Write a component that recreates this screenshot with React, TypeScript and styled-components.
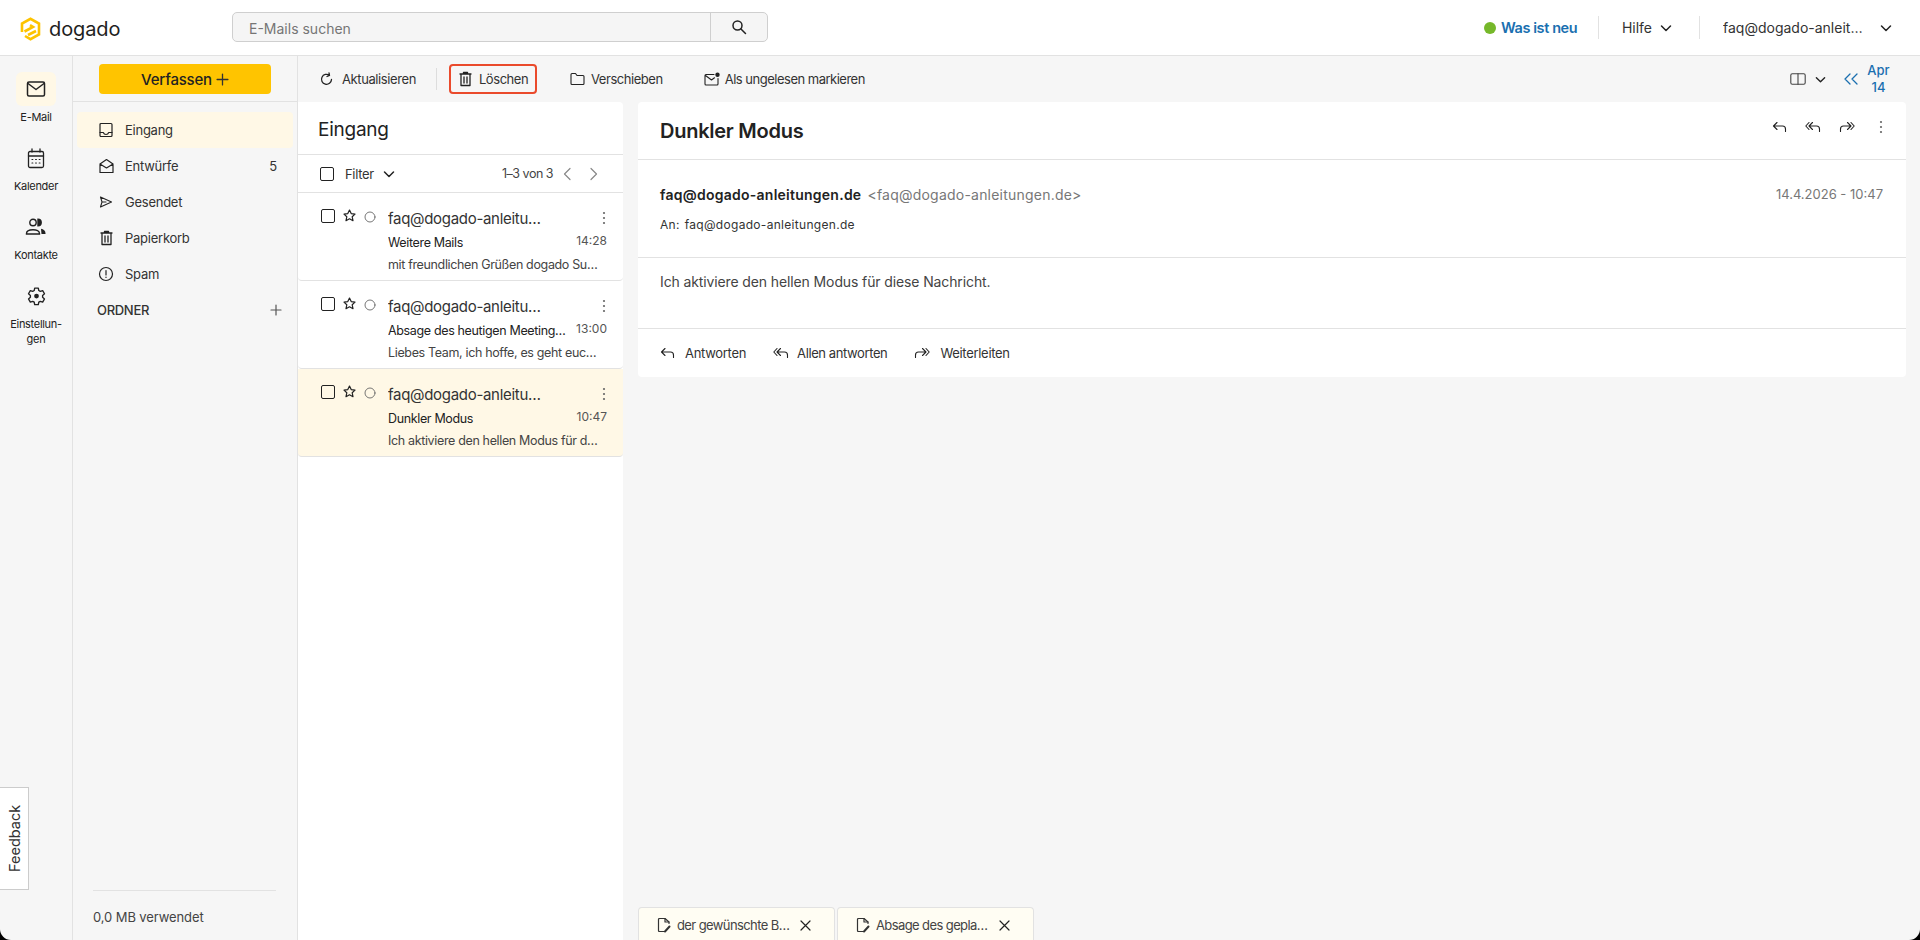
import React from "react";
import styled, { createGlobalStyle } from "styled-components";

const Global = createGlobalStyle`
  html, body { margin: 0; padding: 0; background: #000; height: 100%; overflow: hidden; }
  #root { height: 100%; }
  * { box-sizing: border-box; }
  body { font-family: Inter, "Noto Sans", sans-serif; color: #222; }
`;

const Page = styled.div`
  position: relative;
  width: 1920px;
  height: 940px;
  background: #f6f6f6;
  border-radius: 0 0 11px 11px;
  overflow: hidden;
  display: flex;
  flex-direction: column;
`;

const Header = styled.header`
  height: 56px;
  flex: none;
  background: #fff;
  border-bottom: 1px solid #e2e2e2;
  display: flex;
  align-items: center;
  padding: 0 28px 1px 20px;
`;
const LogoWrap = styled.div`
  width: 212px;
  margin-top: 4px;
  display: flex;
  align-items: center;
  gap: 8px;
  font-size: 20px;
  letter-spacing: -0.1px;
  color: #1f1f1f;
`;
const Search = styled.div`
  width: 536px;
  height: 30px;
  display: flex;
  background: #f5f5f5;
  border: 1px solid #cfcfcf;
  border-radius: 5px;
`;
const SearchText = styled.div`
  flex: 1;
  padding-left: 16px;
  line-height: 31px;
  font-size: 14px;
  color: #757575;
`;
const SearchBtn = styled.div`
  width: 57px;
  border-left: 1px solid #cfcfcf;
  display: flex;
  align-items: center;
  justify-content: center;
`;
const HeaderRight = styled.div`
  margin-left: auto;
  margin-top: 1px;
  display: flex;
  align-items: center;
`;
const Dot = styled.span`
  width: 12px;
  height: 12px;
  border-radius: 50%;
  background: #76b82a;
  margin-right: 5px;
`;
const WhatsNew = styled.span`
  width: 75px;
  white-space: nowrap;
  font-size: 14.5px;
  font-weight: 600;
  color: #1a6fb0;
  letter-spacing: -0.4px;
  margin-right: 22px;
`;
const HeadDivider = styled.span<{ $ml?: number }>`
  width: 1px;
  height: 23px;
  background: #e2e2e2;
  margin-left: ${(p) => p.$ml ?? 0}px;
`;
const HeadLink = styled.span<{ $l: number; $r: number; $w?: number }>`
  font-size: 14px;
  color: #333;
  white-space: nowrap;
  margin-left: ${(p) => p.$l}px;
  margin-right: ${(p) => p.$r}px;
  ${(p) => (p.$w ? `width: ${p.$w}px; overflow: hidden; text-overflow: ellipsis;` : "")}
`;

const Body = styled.div`
  flex: 1;
  min-height: 0;
  display: flex;
`;
const Rail = styled.nav`
  width: 73px;
  flex: none;
  padding-top: 16px;
  border-right: 1px solid #e2e2e2;
  display: flex;
  flex-direction: column;
`;
const RailItem = styled.div`
  height: 69px;
  display: flex;
  flex-direction: column;
  align-items: center;
`;
const RailIcon = styled.div<{ $active?: boolean }>`
  width: 40px;
  height: 34px;
  flex: none;
  border-radius: 6px;
  display: flex;
  align-items: center;
  justify-content: center;
  background: ${(p) => (p.$active ? "#fff8e6" : "transparent")};
`;
const RailLabel = styled.div`
  margin-top: 4px;
  font-size: 11px;
  line-height: 15px;
  letter-spacing: -0.3px;
  text-align: center;
  color: #222;
`;

const Folders = styled.aside`
  width: 225px;
  flex: none;
  border-right: 1px solid #e2e2e2;
  display: flex;
  flex-direction: column;
`;
const ComposeBar = styled.div`
  height: 46px;
  flex: none;
  padding-top: 8px;
  display: flex;
  justify-content: center;
  border-bottom: 1px solid #e2e2e2;
`;
const Compose = styled.div`
  width: 172px;
  height: 30px;
  background: #ffc400;
  border-radius: 4px;
  display: flex;
  align-items: center;
  justify-content: center;
  gap: 4px;
  font-size: 15px;
  font-weight: 500;
  letter-spacing: -0.2px;
  color: #222;
`;
const FolderList = styled.div`
  padding: 10px 4px 0;
`;
const FolderRow = styled.div<{ $active?: boolean }>`
  height: 36px;
  padding: 0 16px 0 21px;
  display: flex;
  align-items: center;
  gap: 11px;
  border-radius: 4px;
  font-size: 13px;
  letter-spacing: -0.25px;
  color: #333;
  background: ${(p) => (p.$active ? "#fff8e6" : "transparent")};
`;
const SectionRow = styled(FolderRow)`
  padding: 0 11px 0 20px;
`;
const FolderIcon = styled.span`
  width: 16px;
  display: flex;
  justify-content: center;
`;
const FolderName = styled.span`
  flex: 1;
`;
const SectionName = styled.span`
  flex: 1;
  font-size: 13px;
  font-weight: 500;
  letter-spacing: -0.3px;
`;
const FolderFooter = styled.div`
  margin: auto 21px 0 20px;
  height: 50px;
  border-top: 1px solid #e2e2e2;
  padding-top: 18px;
  font-size: 13px;
  line-height: 16px;
  letter-spacing: -0.1px;
  color: #444;
`;
const Feedback = styled.div`
  position: absolute;
  left: 0;
  top: 787px;
  width: 29px;
  height: 103px;
  background: #fff;
  border: 1px solid #ccc;
  border-right: 0;
  writing-mode: vertical-rl;
  transform: rotate(180deg);
  display: flex;
  align-items: center;
  justify-content: center;
  font-size: 14.5px;
  color: #333;
`;

const Main = styled.main`
  flex: 1;
  min-width: 0;
  display: flex;
  flex-direction: column;
`;
const Toolbar = styled.div`
  height: 46px;
  flex: none;
  display: flex;
  align-items: center;
  padding: 0 26px 0 22px;
  font-size: 13px;
  letter-spacing: -0.45px;
  color: #333;
`;
const ToolBtn = styled.div<{ $gap: number; $mr: number; $ls?: number }>`
  display: flex;
  align-items: center;
  gap: ${(p) => p.$gap}px;
  margin-right: ${(p) => p.$mr}px;
  ${(p) => (p.$ls !== undefined ? `letter-spacing: ${p.$ls}px;` : "")}
`;
const ToolDivider = styled.span`
  width: 1px;
  height: 22px;
  background: #ddd;
  margin-right: 12px;
`;
const DeleteBtn = styled.div`
  width: 88px;
  height: 30px;
  margin-right: 33px;
  padding-left: 7px;
  border: 2px solid #ea4a2c;
  border-radius: 4px;
  display: flex;
  align-items: center;
  gap: 6px;
`;
const ToolRight = styled.div`
  margin-left: auto;
  display: flex;
  align-items: center;
`;
const ToolSpacer = styled.span<{ $w: number }>`
  width: ${(p) => p.$w}px;
`;
const DateNav = styled.div`
  width: 31px;
  margin-left: 5px;
  font-size: 13px;
  line-height: 17px;
  font-weight: 500;
  letter-spacing: 0;
  color: #1a6fb0;
  text-align: center;
`;

const Content = styled.div`
  flex: 1;
  min-height: 0;
  display: flex;
  gap: 15px;
  padding-right: 14px;
`;
const ListCard = styled.section`
  width: 325px;
  flex: none;
  background: #fff;
  border-radius: 0 4px 0 0;
`;
const ListTitle = styled.div`
  height: 53px;
  padding: 3px 20px 0;
  display: flex;
  align-items: center;
  font-size: 19px;
  letter-spacing: -0.25px;
  color: #222;
  border-bottom: 1px solid #e2e2e2;
`;
const FilterBar = styled.div`
  height: 38px;
  padding: 0 24px 0 22px;
  display: flex;
  align-items: center;
  border-bottom: 1px solid #e2e2e2;
  font-size: 13px;
  color: #333;
`;
const Check = styled.span`
  width: 14px;
  height: 14px;
  flex: none;
  border: 1.5px solid #222;
  border-radius: 2px;
`;
const FilterText = styled.span`
  margin: 0 9px 0 11px;
  letter-spacing: -0.3px;
`;
const Pager = styled.div`
  margin-left: auto;
  display: flex;
  align-items: center;
  gap: 9px;
  font-size: 12.5px;
  letter-spacing: -0.5px;
  color: #444;
`;
const PagerNext = styled.span`
  margin-left: 8px;
  display: flex;
`;
const MailRow = styled.div<{ $selected?: boolean }>`
  height: 88px;
  padding: 15px 17px 0 23px;
  display: flex;
  background: ${(p) => (p.$selected ? "#fff8e6" : "#fff")};
  border-bottom: 1px solid #e2e2e2;
  border-radius: 0 0 4px 4px;
`;
const RowMarks = styled.div`
  width: 67px;
  flex: none;
  padding-top: 1px;
  display: flex;
  align-items: flex-start;
  gap: 8px;
`;
const RingWrap = styled.span`
  margin-top: 2px;
  display: flex;
`;
const RowBody = styled.div`
  flex: 1;
  min-width: 0;
`;
const RowLine = styled.div<{ $h: number }>`
  height: ${(p) => p.$h}px;
  display: flex;
  align-items: center;
  justify-content: space-between;
`;
const Sender = styled.span`
  width: 161px;
  font-size: 15px;
  letter-spacing: -0.3px;
  color: #333;
  white-space: nowrap;
  overflow: hidden;
  text-overflow: ellipsis;
`;
const Subject = styled.span`
  width: 180px;
  font-size: 12.5px;
  letter-spacing: -0.35px;
  color: #222;
  white-space: nowrap;
  overflow: hidden;
  text-overflow: ellipsis;
`;
const Time = styled.span`
  font-size: 12px;
  color: #555;
  margin: -4px -1px 0 0;
`;
const Preview = styled.div`
  width: 212px;
  font-size: 12.5px;
  line-height: 17px;
  letter-spacing: -0.35px;
  color: #444;
  white-space: nowrap;
  overflow: hidden;
  text-overflow: ellipsis;
`;

const Reader = styled.div`
  flex: 1;
  min-width: 0;
  display: flex;
  flex-direction: column;
`;
const MailCard = styled.article`
  height: 275px;
  flex: none;
  background: #fff;
  border-radius: 4px;
`;
const MailHead = styled.div`
  height: 58px;
  padding: 0 23px 0 22px;
  display: flex;
  align-items: center;
  justify-content: space-between;
  border-bottom: 1px solid #e2e2e2;
`;
const MailTitle = styled.h1`
  margin: 0;
  font-size: 20px;
  font-weight: 600;
  letter-spacing: -0.25px;
  color: #222;
`;
const MailIcons = styled.div`
  display: flex;
  gap: 18px;
  margin-top: -7px;
`;
const MailDotsWrap = styled.span`
  margin-left: 6px;
  display: flex;
`;
const MailMeta = styled.div`
  height: 98px;
  padding: 23px 23px 0 22px;
  border-bottom: 1px solid #e2e2e2;
`;
const MetaTop = styled.div`
  display: flex;
  align-items: center;
  height: 22px;
`;
const From = styled.span`
  font-size: 14px;
  font-weight: 600;
  letter-spacing: 0.25px;
  color: #222;
`;
const Addr = styled.span`
  margin-left: 6px;
  font-size: 14px;
  color: #777;
  letter-spacing: 0.22px;
`;
const MailDate = styled.span`
  margin-left: auto;
  font-size: 13px;
  color: #777;
`;
const To = styled.div`
  margin-top: 12px;
  font-size: 12px;
  line-height: 16px;
  color: #333;
  letter-spacing: 0.3px;
`;
const ToAddr = styled.span`
  margin-left: 5px;
`;
const MailBody = styled.div`
  height: 71px;
  padding: 14px 22px 0;
  font-size: 14px;
  line-height: 20px;
  letter-spacing: -0.12px;
  color: #444;
  border-bottom: 1px solid #e2e2e2;
`;
const Actions = styled.div`
  height: 47px;
  padding: 0 22px;
  display: flex;
  align-items: center;
  font-size: 13px;
  letter-spacing: -0.3px;
  color: #333;
`;
const ActionBtn = styled.div<{ $gap?: number; $ls?: number }>`
  display: flex;
  align-items: center;
  gap: ${(p) => p.$gap ?? 10}px;
  margin-right: 27px;
  ${(p) => (p.$ls !== undefined ? `letter-spacing: ${p.$ls}px;` : "")}
`;
const Tabs = styled.div`
  margin-top: auto;
  display: flex;
  gap: 2px;
`;
const Tab = styled.div`
  width: 197px;
  height: 33px;
  padding: 2px 22px 0 18px;
  display: flex;
  align-items: center;
  background: #fffdf3;
  border: 1px solid #e2e2e2;
  border-bottom: 0;
  border-radius: 4px 4px 0 0;
  font-size: 13px;
  color: #444;
`;
const TabText = styled.span`
  width: 119px;
  margin: 0 4px 0 6px;
  white-space: nowrap;
  overflow: hidden;
  text-overflow: ellipsis;
  letter-spacing: -0.6px;
`;

type IconProps = { w?: number; h?: number; c?: string; sw?: number; children: React.ReactNode; vb?: string };
const Ico = ({ w = 16, h = 16, c = "#222", sw = 1.4, vb = "0 0 16 16", children }: IconProps) => (
  <svg width={w} height={h} viewBox={vb} fill="none" stroke={c} strokeWidth={sw} strokeLinecap="round" strokeLinejoin="round" style={{ flex: "none" }}>
    {children}
  </svg>
);

const Logo = () => (
  <svg width="21" height="24" viewBox="0 0 21 24" fill="none" stroke="#fdc300" strokeWidth="2.6" strokeLinejoin="miter" style={{ flex: "none" }}>
    <path d="M2 15V6.500L10.500 1.800 19 6.500V17.500L10.500 22.200 5 19" />
    <path d="M4.500 14.500 13 10 10 8.200M8 18 16 14" />
  </svg>
);
const Chevron = ({ w = 12, c = "#222" }: { w?: number; c?: string }) => (
  <Ico w={w} h={w} c={c} sw={1.5} vb="0 0 12 12"><path d="M1.5 4 6 8.5 10.5 4" /></Ico>
);
const ChevL = () => <Ico w={10} h={14} c="#888" sw={1.2} vb="0 0 10 14"><path d="M8 1.5 2.5 7 8 12.5" /></Ico>;
const ChevR = () => <Ico w={10} h={14} c="#888" sw={1.2} vb="0 0 10 14"><path d="M2 1.5 7.500 7 2 12.5" /></Ico>;

const ReplyI = () => <Ico w={15} h={14} sw={1.1} vb="0 0 15 14"><path d="M5 2.500 1.500 6 5 9.500M1.500 6H10.500Q13.500 6 13.500 9V11.500" /></Ico>;
const ReplyAllI = () => <Ico w={16} h={14} sw={1.1} vb="0 0 16 14"><path d="M4 2.500.8 6 4 9.500M7.500 2.500 4 6 7.500 9.500M4 6H11.500Q14.500 6 14.500 9V11.500" /></Ico>;
const ForwardI = () => <Ico w={16} h={14} sw={1.1} vb="0 0 16 14"><path d="M12 2.500 15.200 6 12 9.500M8.500 2.500 12 6 8.500 9.500M12 6H4.500Q1.500 6 1.500 9V11.500" /></Ico>;
const DotsI = ({ c = "#666" }: { c?: string }) => (
  <svg width="4" height="14" viewBox="0 0 4 14" fill={c} style={{ flex: "none" }}><circle cx="2" cy="2" r="1.1" /><circle cx="2" cy="7" r="1.1" /><circle cx="2" cy="12" r="1.1" /></svg>
);
const TrashI = () => <Ico w={15} h={16} sw={1.3} vb="0 0 15 16"><path d="M2 3H13M5.500 3V1.500H9.500V3M3 3V14.500H12V3M6 6V12M9 6V12" /></Ico>;
const MailI = () => <Ico w={20} h={18} sw={1.5} vb="0 0 20 18"><rect x="1.500" y="2" width="17" height="14" rx="1.500" /><path d="M2 3.500 10 9.500 18 3.500" /></Ico>;
const CalendarI = () => (
  <Ico w={18} h={21} sw={1.3} vb="0 0 18 21">
    <rect x="1.500" y="3.500" width="15" height="16" rx="1.500" />
    <path d="M1.500 8H16.500M5 1V4M13 1V4" />
    <path strokeWidth="1.200" d="M5 11.500h.8M8.600 11.500h.8M12.200 11.500h.8M5 15h.8M8.600 15h.8M12.200 15h.8" />
  </Ico>
);
const ContactsI = () => (
  <svg width="22" height="18" viewBox="0 0 22 18" fill="none" stroke="#222" strokeWidth="1.400" style={{ flex: "none" }}>
    <circle cx="8" cy="4.500" r="3.200" />
    <path d="M13 1.300a3.200 3.200 0 0 1 0 6.400z" fill="#222" />
    <path d="M1.500 15.500c0-2.500 3-3.800 6.500-3.800s6.500 1.300 6.500 3.800v.5h-13z" />
    <path d="M16 10.800c2.500.3 4.500 1.800 4.500 4.700V16H16.500z" fill="#222" stroke="none" />
  </svg>
);
const GearI = () => (
  <svg width="19" height="20" viewBox="0 0 24 24" fill="none" stroke="#222" strokeWidth="1.700" strokeLinejoin="round" style={{ flex: "none" }}>
    <path d="M9.700 2h4.600l.6 3.100 1.900 1.100 3-1 2.300 4-2.400 2.100v2.300l2.400 2.100-2.300 4-3-1-1.900 1.100-.6 3.100H9.700l-.6-3.100-1.900-1.100-3 1-2.300-4 2.400-2.100v-2.300L1.900 9.200l2.300-4 3 1 1.900-1.100z" />
    <circle cx="12" cy="12" r="3" fill="#222" stroke="none" />
  </svg>
);
const InboxI = () => <Ico w={14} h={16} sw={1.2} vb="0 0 14 16"><rect x="1" y="1.500" width="12" height="13" rx="1" /><path d="M1 10.500H4.300Q5 12.500 7 12.500T9.700 10.500H13" /></Ico>;
const DraftI = () => <Ico w={15} h={16} sw={1.200} vb="0 0 15 16"><path d="M1 6 7.500 1.500 14 6V14.500H1zM1 6 7.500 10 14 6" /></Ico>;
const SentI = () => <Ico w={14} h={14} sw={1.100} vb="0 0 14 14"><path d="M1.500 2 12.500 7 1.500 12 3 7zM3 7H7" /></Ico>;
const SpamI = () => (
  <Ico w={16} h={16} sw={1.200} vb="0 0 16 16"><circle cx="8" cy="8" r="6.500" /><path d="M8 4.500V9M8 11.200v.3" /></Ico>
);
const Plus = ({ s = 12, c = "#555" }: { s?: number; c?: string }) => (
  <Ico w={s} h={s} c={c} sw={1.200} vb="0 0 12 12"><path d="M6 1V11M1 6H11" /></Ico>
);
const StarI = () => (
  <Ico w={13} h={13} sw={1.200} vb="0 0 13 13"><path d="M6.500 1 8.200 4.600 12 5.100 9.200 7.800 10 11.700 6.500 9.800 3 11.700 3.800 7.800 1 5.100 4.800 4.600z" /></Ico>
);
const RingI = () => <Ico w={12} h={12} c="#666" sw={0.900} vb="0 0 12 12"><circle cx="6" cy="6" r="5" /></Ico>;
const DraftFileI = () => (
  <Ico w={14} h={16} c="#333" sw={1.200} vb="0 0 14 16">
    <path d="M7.500 14.500H2.500Q1.500 14.500 1.500 13.500V2.500Q1.500 1.500 2.500 1.500H8L12 5V6.500" />
    <path d="M8 1.500V5H12" />
    <path d="M8 14.500 12.500 9.500" strokeWidth="2" />
  </Ico>
);
const CloseI = () => <Ico w={11} h={11} sw={1.200} vb="0 0 11 11"><path d="M1 1 10 10M10 1 1 10" /></Ico>;

const mails = [
  { subject: "Weitere Mails", time: "14:28", preview: "mit freundlichen Grüßen dogado Support Team" },
  { subject: "Absage des heutigen Meetings wegen", time: "13:00", preview: "Liebes Team, ich hoffe, es geht euch allen gut" },
  { subject: "Dunkler Modus", time: "10:47", preview: "Ich aktiviere den hellen Modus für diese Nachricht.", selected: true },
];
const folders = [
  { name: "Eingang", icon: <InboxI />, active: true },
  { name: "Entwürfe", icon: <DraftI />, count: "5" },
  { name: "Gesendet", icon: <SentI /> },
  { name: "Papierkorb", icon: <TrashI /> },
  { name: "Spam", icon: <SpamI /> },
];

export default function App() {
  return (
    <Page>
      <Global />
      <Header>
        <LogoWrap><Logo />dogado</LogoWrap>
        <Search>
          <SearchText>E-Mails suchen</SearchText>
          <SearchBtn>
            <Ico w={16} h={16} sw={1.500}><circle cx="6.500" cy="6.500" r="4.500" /><path d="M10 10 14.500 14.500" /></Ico>
          </SearchBtn>
        </Search>
        <HeaderRight>
          <Dot />
          <WhatsNew>Was ist neu</WhatsNew>
          <HeadDivider />
          <HeadLink $l={23} $r={8}>Hilfe</HeadLink>
          <Chevron />
          <HeadDivider $ml={27} />
          <HeadLink $l={23} $r={13} $w={144}>faq@dogado-anleitungen.de</HeadLink>
          <Chevron />
        </HeaderRight>
      </Header>
      <Body>
        <Rail>
          <RailItem><RailIcon $active><MailI /></RailIcon><RailLabel>E-Mail</RailLabel></RailItem>
          <RailItem><RailIcon><CalendarI /></RailIcon><RailLabel>Kalender</RailLabel></RailItem>
          <RailItem><RailIcon><ContactsI /></RailIcon><RailLabel>Kontakte</RailLabel></RailItem>
          <RailItem><RailIcon><GearI /></RailIcon><RailLabel>Einstellun-<br />gen</RailLabel></RailItem>
        </Rail>
        <Folders>
          <ComposeBar><Compose>Verfassen <Plus s={13} c="#333" /></Compose></ComposeBar>
          <FolderList>
            {folders.map((f) => (
              <FolderRow key={f.name} $active={f.active}>
                <FolderIcon>{f.icon}</FolderIcon>
                <FolderName>{f.name}</FolderName>
                {f.count}
              </FolderRow>
            ))}
            <SectionRow>
              <SectionName>ORDNER</SectionName>
              <Plus />
            </SectionRow>
          </FolderList>
          <FolderFooter>0,0 MB verwendet</FolderFooter>
        </Folders>
        <Main>
          <Toolbar>
            <ToolBtn $gap={9} $mr={20} $ls={-0.4}>
              <Ico w={13} h={14} sw={1.300} vb="0 0 13 14"><path d="M11.500 7.500A5 5 0 1 1 9.500 3.300M9 .8 9.500 3.300 7 4.500" /></Ico>
              Aktualisieren
            </ToolBtn>
            <ToolDivider />
            <DeleteBtn><TrashI />Löschen</DeleteBtn>
            <ToolBtn $gap={6} $mr={41}>
              <Ico w={15} h={14} sw={1.100} vb="0 0 15 14"><path d="M1 2.500Q1 1.500 2 1.500H5.500L7 3.500H13Q14 3.500 14 4.500V11.500Q14 12.500 13 12.500H2Q1 12.500 1 11.500z" /></Ico>
              Verschieben
            </ToolBtn>
            <ToolBtn $gap={5} $mr={0} $ls={-0.5}>
              <Ico w={16} h={14} sw={1.100} vb="0 0 16 14"><path d="M10 2.500H2Q1 2.500 1 3.500V12Q1 13 2 13H13Q14 13 14 12V6.500M1.500 3.500 7.500 8 10.500 5.800" /><circle cx="13.500" cy="2.800" r="2.200" fill="#222" stroke="none" /></Ico>
              Als ungelesen markieren
            </ToolBtn>
            <ToolRight>
              <Ico w={16} h={12} c="#444" sw={1.100} vb="0 0 16 12"><rect x=".8" y=".8" width="14.400" height="10.400" rx="1.500" /><path d="M8 .8V11.200" /></Ico>
              <ToolSpacer $w={9} />
              <Chevron w={11} />
              <ToolSpacer $w={18} />
              <Ico w={14} h={12} c="#1a6fb0" sw={1.300} vb="0 0 14 12"><path d="M6 1 1 6 6 11M13 1 8 6 13 11" /></Ico>
              <DateNav>Apr<br />14</DateNav>
            </ToolRight>
          </Toolbar>
          <Content>
            <ListCard>
              <ListTitle>Eingang</ListTitle>
              <FilterBar>
                <Check />
                <FilterText>Filter</FilterText>
                <Chevron />
                <Pager>1–3 von 3 <ChevL /> <PagerNext><ChevR /></PagerNext></Pager>
              </FilterBar>
              {mails.map((m) => (
                <MailRow key={m.time} $selected={m.selected}>
                  <RowMarks><Check /><StarI /><RingWrap><RingI /></RingWrap></RowMarks>
                  <RowBody>
                    <RowLine $h={20}><Sender>faq@dogado-anleitungen.de</Sender><DotsI /></RowLine>
                    <RowLine $h={28}><Subject>{m.subject}</Subject><Time>{m.time}</Time></RowLine>
                    <Preview>{m.preview}</Preview>
                  </RowBody>
                </MailRow>
              ))}
            </ListCard>
            <Reader>
              <MailCard>
                <MailHead>
                  <MailTitle>Dunkler Modus</MailTitle>
                  <MailIcons><ReplyI /><ReplyAllI /><ForwardI /><MailDotsWrap><DotsI /></MailDotsWrap></MailIcons>
                </MailHead>
                <MailMeta>
                  <MetaTop>
                    <From>faq@dogado-anleitungen.de</From>
                    <Addr>&lt;faq@dogado-anleitungen.de&gt;</Addr>
                    <MailDate>14.4.2026 - 10:47</MailDate>
                  </MetaTop>
                  <To>An:<ToAddr>faq@dogado-anleitungen.de</ToAddr></To>
                </MailMeta>
                <MailBody>Ich aktiviere den hellen Modus für diese Nachricht.</MailBody>
                <Actions>
                  <ActionBtn><ReplyI />Antworten</ActionBtn>
                  <ActionBtn $gap={8} $ls={-0.4}><ReplyAllI />Allen antworten</ActionBtn>
                  <ActionBtn><ForwardI />Weiterleiten</ActionBtn>
                </Actions>
              </MailCard>
              <Tabs>
                <Tab><DraftFileI /><TabText>der gewünschte Betreff der Mail</TabText><CloseI /></Tab>
                <Tab><DraftFileI /><TabText>Absage des geplanten Termins</TabText><CloseI /></Tab>
              </Tabs>
            </Reader>
          </Content>
        </Main>
      </Body>
      <Feedback>Feedback</Feedback>
    </Page>
  );
}
